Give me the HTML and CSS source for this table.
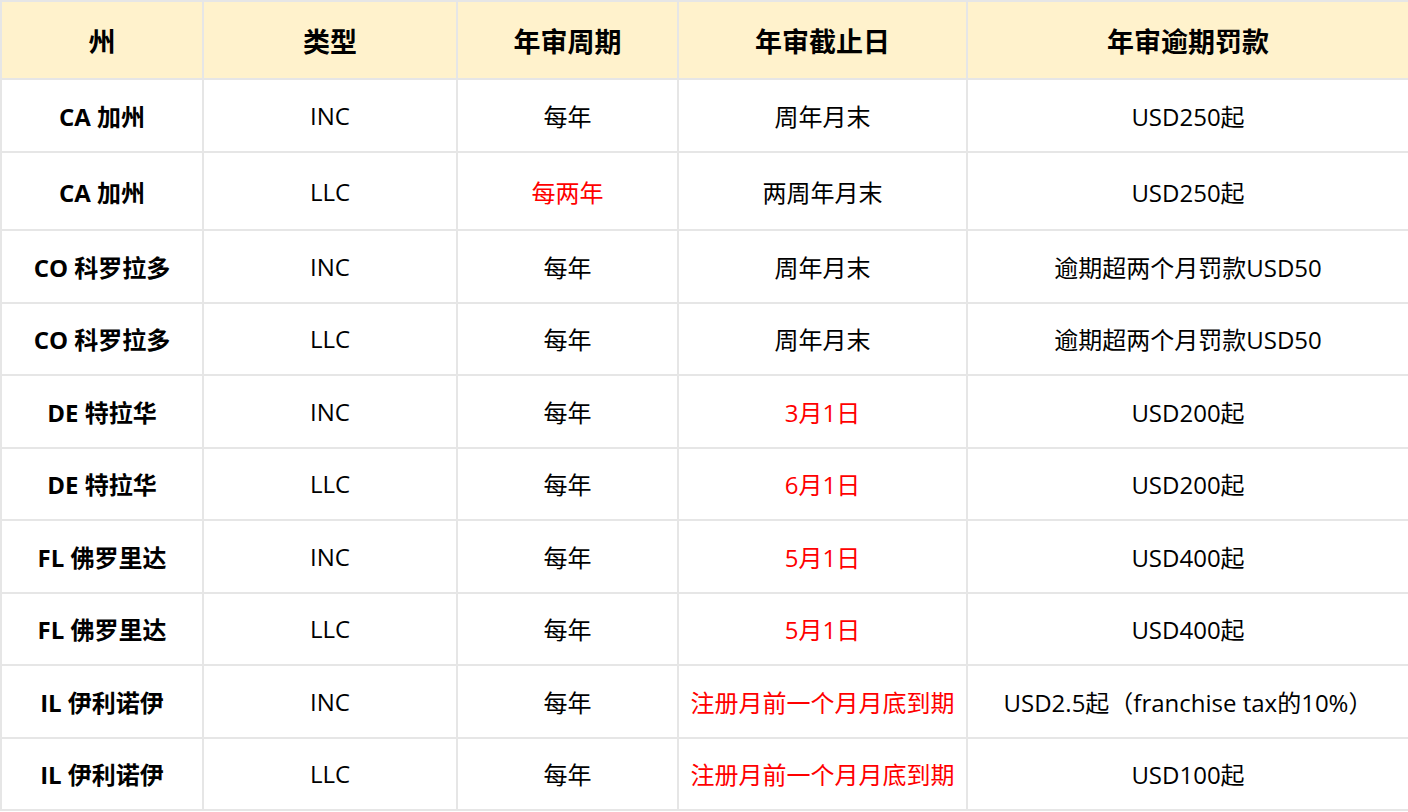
FILE: index.html
```html
<!DOCTYPE html>
<html lang="zh-CN">
<head>
<meta charset="utf-8">
<title>年审</title>
<link rel="stylesheet" href="styles.css">
</head>
<body>
<table class="grid">
  <colgroup>
    <col class="c1"><col class="c2"><col class="c3"><col class="c4"><col class="c5">
  </colgroup>
  <thead>
    <tr><th>州</th><th>类型</th><th>年审周期</th><th>年审截止日</th><th>年审逾期罚款</th></tr>
  </thead>
  <tbody>
    <tr class="r-first"><td class="st">CA 加州</td><td>INC</td><td>每年</td><td>周年月末</td><td>USD250起</td></tr>
    <tr class="r-tall"><td class="st">CA 加州</td><td>LLC</td><td class="red">每两年</td><td>两周年月末</td><td>USD250起</td></tr>
    <tr><td class="st">CO 科罗拉多</td><td>INC</td><td>每年</td><td>周年月末</td><td>逾期超两个月罚款USD50</td></tr>
    <tr><td class="st">CO 科罗拉多</td><td>LLC</td><td>每年</td><td>周年月末</td><td>逾期超两个月罚款USD50</td></tr>
    <tr><td class="st">DE 特拉华</td><td>INC</td><td>每年</td><td class="red">3月1日</td><td>USD200起</td></tr>
    <tr><td class="st">DE 特拉华</td><td>LLC</td><td>每年</td><td class="red">6月1日</td><td>USD200起</td></tr>
    <tr><td class="st">FL 佛罗里达</td><td>INC</td><td>每年</td><td class="red">5月1日</td><td>USD400起</td></tr>
    <tr><td class="st">FL 佛罗里达</td><td>LLC</td><td>每年</td><td class="red">5月1日</td><td>USD400起</td></tr>
    <tr><td class="st">IL 伊利诺伊</td><td>INC</td><td>每年</td><td class="red">注册月前一个月月底到期</td><td>USD2.5起（franchise tax的10%）</td></tr>
    <tr><td class="st">IL 伊利诺伊</td><td>LLC</td><td>每年</td><td class="red">注册月前一个月月底到期</td><td>USD100起</td></tr>
  </tbody>
</table>
</body>
</html>
```

FILE: styles.css
```css
html, body {
  margin: 0;
  padding: 0;
  background: #ffffff;
}
body {
  font-family: "Open Sans", "Noto Sans CJK SC", sans-serif;
  color: #000000;
}
.grid {
  border-collapse: collapse;
  table-layout: fixed;
  width: 1408px;
}
.c1 { width: 202px; }
.c2 { width: 254px; }
.c3 { width: 221px; }
.c4 { width: 289px; }
.c5 { width: 442px; }
.grid th, .grid td {
  border: 2px solid #e6e6e6;
  text-align: center;
  vertical-align: middle;
  padding: 0;
  white-space: nowrap;
}
.grid th {
  background: #fff2cc;
  font-size: 27px;
  font-weight: 700;
  height: 76px;
}
.grid td {
  font-size: 24px;
  height: 70.5px;
}
.grid tr.r-first td {
  height: 71px;
}
.grid tr.r-tall td {
  height: 76px;
}
.grid td.st {
  font-weight: 700;
}
.grid td.red {
  color: #ff0000;
}
```
